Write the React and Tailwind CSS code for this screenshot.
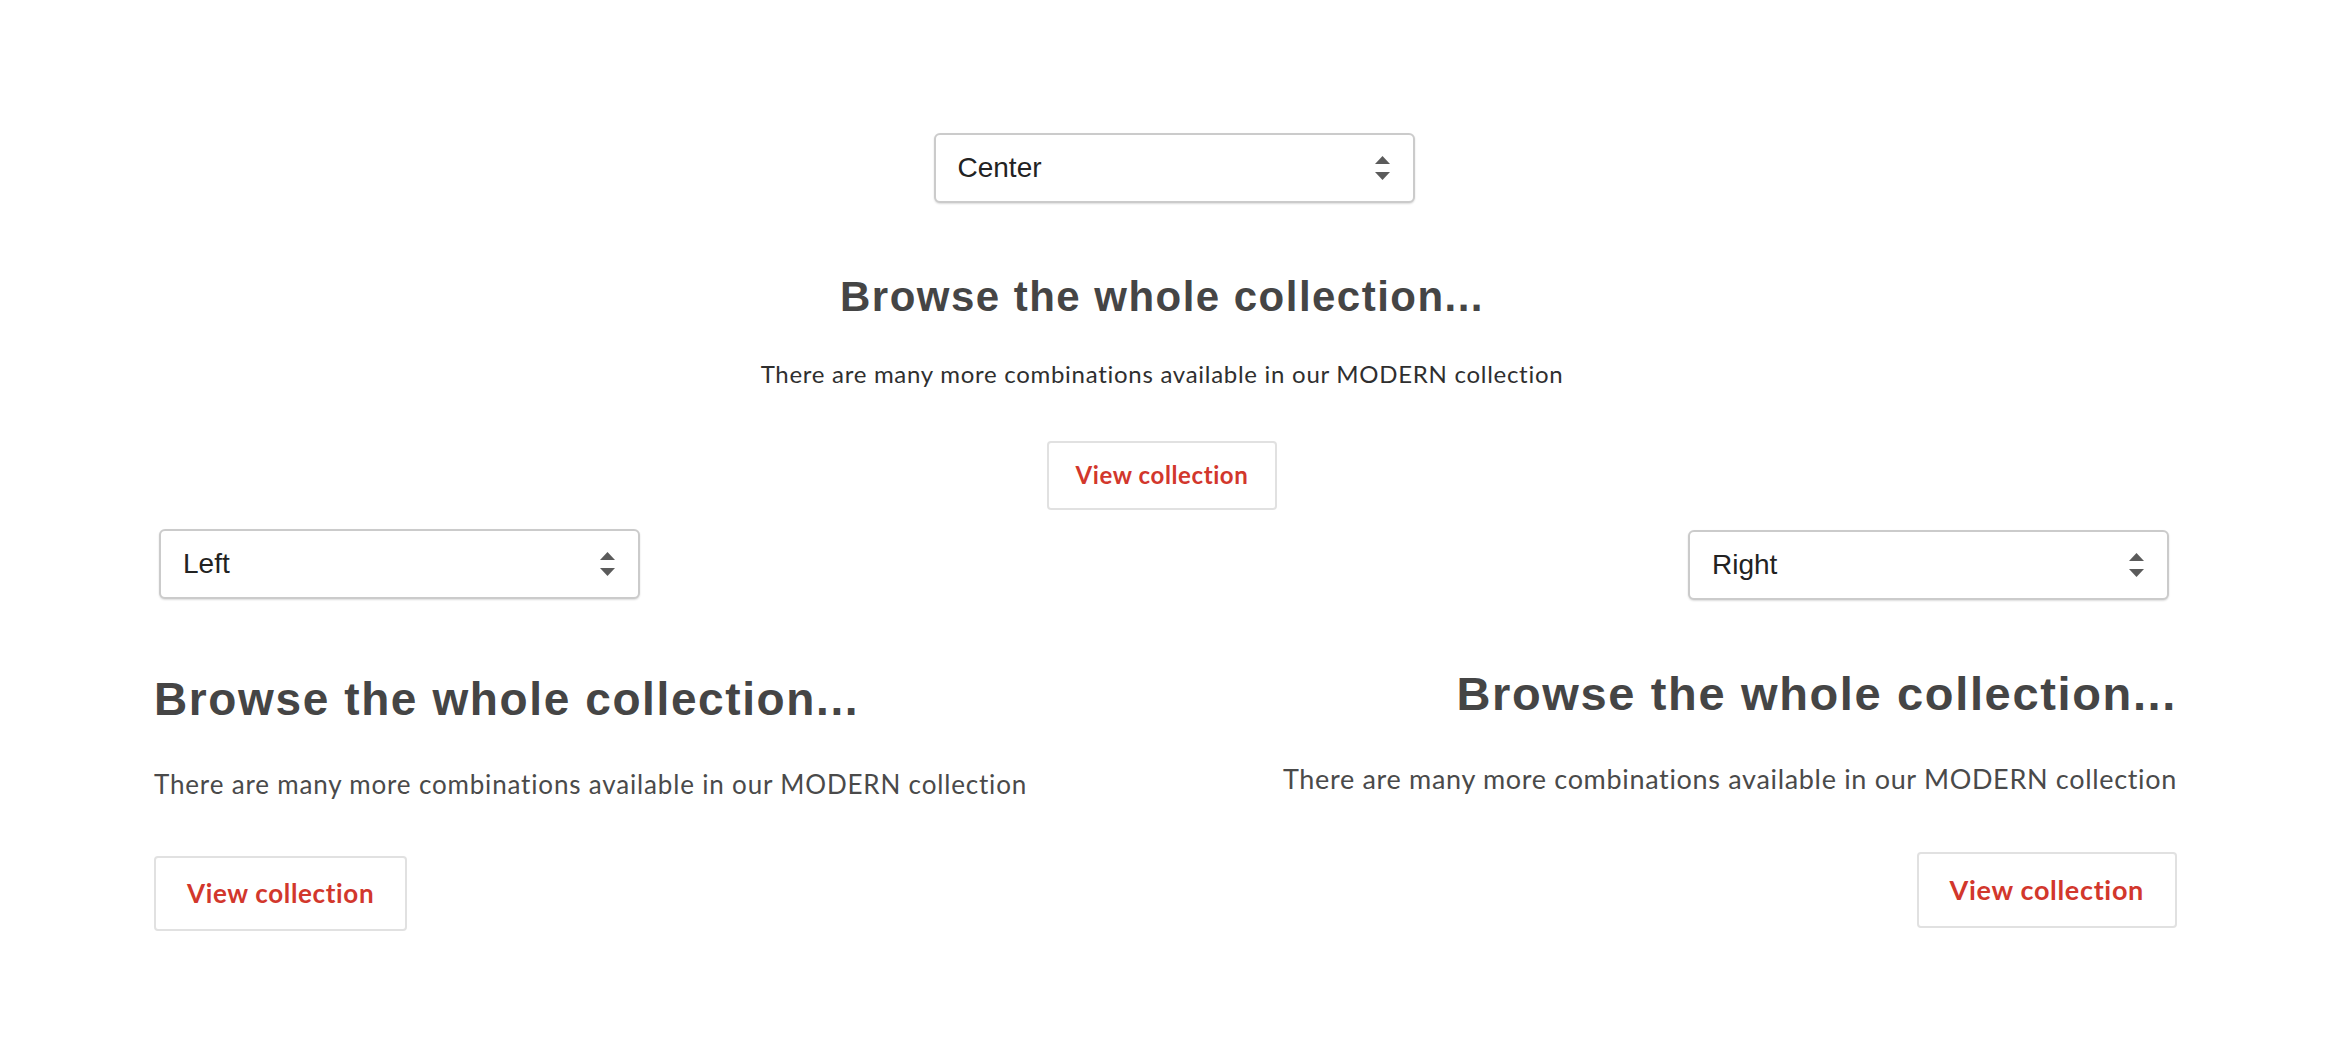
import React, { useState } from "react";

// alignment choices shown in every select
const alignOptions = ["Left", "Center", "Right"];

const alignClasses = {
  Left: "items-start text-left",
  Center: "items-center text-center",
  Right: "items-end text-right",
};

const sizes = {
  sm: {
    heading: "text-[42px]",
    para: "mt-[42px] text-[24px] tracking-[0.03em] text-[#2f2f2f]",
    button: "mt-[52px] py-[18px] px-[27px] text-[24px]",
  },
  md: {
    heading: "text-[46px]",
    para: "mt-[47px] text-[26px] tracking-[0.032em] text-[#4a4a4a]",
    button: "mt-[56px] py-[20px] px-[31px] text-[26px]",
  },
  lg: {
    heading: "text-[47px]",
    para: "mt-[46px] text-[27px] tracking-[0.025em] text-[#4a4a4a]",
    button: "mt-[57px] py-[20px] px-[31px] text-[27px]",
  },
};

function Arrows() {
  return (
    <svg
      width="15"
      height="24"
      viewBox="0 0 15 24"
      className="pointer-events-none absolute right-[25px] top-1/2 -translate-y-1/2"
    >
      <path d="M7.5 0 L15 8 L0 8 Z" fill="#5b5b5b" />
      <path d="M0 16 L15 16 L7.5 24 Z" fill="#5b5b5b" />
    </svg>
  );
}

function AlignSelect({ value, onChange, className }) {
  return (
    <div className={`relative h-[70px] w-[481px] ${className}`}>
      <select
        value={value}
        onChange={(e) => onChange(e.target.value)}
        className="h-full w-full appearance-none rounded-[6px] border-2 border-[#cbcbcb] bg-white pl-[22px] pr-12 font-['Liberation_Sans',Arial,sans-serif] text-[28px] text-[#222222] shadow-[0_1px_2px_rgba(0,0,0,0.14)] outline-none"
      >
        {alignOptions.map((opt) => (
          <option key={opt} value={opt}>
            {opt}
          </option>
        ))}
      </select>
      <Arrows />
    </div>
  );
}

function CollectionBlock({ initial, size, selectClass, headingGap, className = "" }) {
  const [align, setAlign] = useState(initial);
  const s = sizes[size];

  return (
    <div className={`flex flex-col ${alignClasses[align]} ${className}`}>
      <AlignSelect value={align} onChange={setAlign} className={selectClass} />
      <h2
        className={`${headingGap} ${s.heading} font-['Liberation_Sans',Arial,sans-serif] font-bold leading-none tracking-[0.035em] text-[#454545]`}
      >
        Browse the whole collection...
      </h2>
      <p className={`${s.para} font-['Lato',sans-serif] leading-[1.2]`}>
        There are many more combinations available in our MODERN collection
      </p>
      <button
        className={`${s.button} rounded-[4px] border-2 border-[#e1e1e1] bg-white font-['Lato',sans-serif] font-bold leading-[1.2] tracking-[0.025em] text-[#d2372c]`}
      >
        View collection
      </button>
    </div>
  );
}

export default function App() {
  return (
    <div className="min-h-[1040px] w-full bg-white pt-[133px]">
      <CollectionBlock
        initial="Center"
        size="sm"
        selectClass="ml-[24px]"
        headingGap="mt-[73px]"
        className="pl-[154px] pr-[180px]"
      />

      <div className="mt-[19px] grid grid-cols-2 pl-[154px] pr-[173px]">
        <CollectionBlock initial="Left" size="md" selectClass="ml-[5px]" headingGap="mt-[77px]" />
        <CollectionBlock
          initial="Right"
          size="lg"
          selectClass="mt-[1px] mr-[8px]"
          headingGap="mt-[70px]"
        />
      </div>
    </div>
  );
}
